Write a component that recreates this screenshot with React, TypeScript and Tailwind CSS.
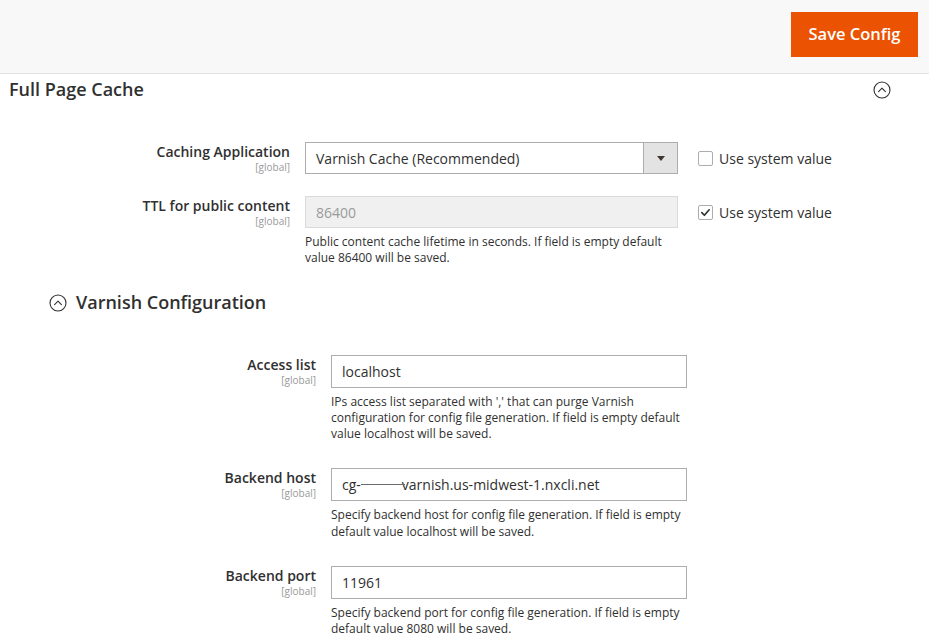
import React from "react";

const font = { fontFamily: '"Open Sans", "Liberation Sans", sans-serif' };

function CircleUp({ className = "" }: { className?: string }) {
    return (
        <svg viewBox="0 0 18 18" className={className} fill="none" stroke="#303030" strokeWidth="1.1">
            <circle cx="9" cy="9" r="8" />
            <path d="M5.6 10.6 L9 7.2 L12.4 10.6" strokeLinecap="round" strokeLinejoin="round" />
        </svg>
    );
}

function Checkbox({ checked }: { checked?: boolean }) {
    return (
        <span className="w-[15px] h-[15px] border border-[#adadad] bg-white rounded-[2px] flex items-center justify-center shrink-0">
            {checked && (
                <svg viewBox="0 0 12 12" className="w-[11px] h-[11px]" fill="none" stroke="#303030" strokeWidth="1.8">
                    <path d="M2 6.2 L4.8 9 L10 3" strokeLinecap="round" strokeLinejoin="round" />
                </svg>
            )}
        </span>
    );
}

function Label({ text, width }: { text: string; width: string }) {
    return (
        <div className={`${width} shrink-0 text-right pt-[1px] pr-[15px]`}>
            <div className="text-[14px] leading-[18px] font-semibold text-[#303030]">{text}</div>
            <div className="text-[10px] leading-[12px] text-[#999999]">[global]</div>
        </div>
    );
}

function Note({ children }: { children: React.ReactNode }) {
    return <p className="mt-[6px] text-[12px] leading-[16.25px] text-[#303030]">{children}</p>;
}

export default function App() {
    return (
        <div className="min-h-screen bg-white" style={font}>
            {/* top action bar */}
            <div className="h-[74px] bg-[#f8f8f8] border-b border-[#e3e3e3] flex items-start justify-end pr-[11px] pt-[12px]">
                <button className="h-[45px] w-[127px] bg-[#eb5202] text-white text-[16.5px] font-semibold">
                    Save Config
                </button>
            </div>

            {/* section header */}
            <div className="flex items-center justify-between pl-[9px] pr-[38px] h-[31px]">
                <h2 className="text-[18px] font-semibold text-[#303030]">Full Page Cache</h2>
                <CircleUp className="w-[18px] h-[18px]" />
            </div>

            <div className="pt-[37px]">
                {/* Caching Application */}
                <div className="flex">
                    <Label text="Caching Application" width="w-[305px]" />
                    <div className="w-[373px] h-[32px] border border-[#adadad] flex items-stretch">
                        <div className="flex-1 flex items-center pl-[10px] text-[14px] text-[#303030]">
                            Varnish Cache (Recommended)
                        </div>
                        <div className="w-[34px] bg-[#e3e3e3] border-l border-[#adadad] flex items-center justify-center">
                            <span className="w-0 h-0 border-l-[4px] border-r-[4px] border-t-[5px] border-l-transparent border-r-transparent border-t-[#41362f]" />
                        </div>
                    </div>
                    <label className="ml-[20px] flex items-center gap-[6px] h-[32px] text-[14px] text-[#303030]">
                        <Checkbox />
                        Use system value
                    </label>
                </div>

                {/* TTL */}
                <div className="flex mt-[22px]">
                    <Label text="TTL for public content" width="w-[305px]" />
                    <div className="w-[373px]">
                        <div className="h-[32px] border border-[#dadada] bg-[#f0f0f0] flex items-center pl-[10px] text-[14px] text-[#9a9a9a]">
                            86400
                        </div>
                        <Note>
                            Public content cache lifetime in seconds. If field is empty default value 86400 will be
                            saved.
                        </Note>
                    </div>
                    <label className="ml-[20px] flex items-center gap-[6px] h-[32px] text-[14px] text-[#303030]">
                        <Checkbox checked />
                        Use system value
                    </label>
                </div>
            </div>

            {/* Varnish Configuration */}
            <div className="flex items-center gap-[9px] pl-[49px] mt-[25px] h-[22px]">
                <CircleUp className="w-[18px] h-[18px]" />
                <h3 className="text-[18px] font-semibold text-[#303030]">Varnish Configuration</h3>
            </div>

            <div className="pt-[41px] flex flex-col gap-[26px]">
                <div className="flex">
                    <Label text="Access list" width="w-[331px]" />
                    <div className="w-[356px]">
                        <div className="h-[33px] border border-[#adadad] flex items-center pl-[10px] text-[14px] text-[#303030]">
                            localhost
                        </div>
                        <Note>
                            IPs access list separated with ',' that can purge Varnish configuration for config file
                            generation. If field is empty default value localhost will be saved.
                        </Note>
                    </div>
                </div>

                <div className="flex">
                    <Label text="Backend host" width="w-[331px]" />
                    <div className="w-[356px]">
                        <div className="h-[33px] border border-[#adadad] flex items-center pl-[10px] text-[14px] text-[#303030]">
                            cg-
                            <span className="inline-block w-[44px] h-px bg-[#6b6b6b] -mr-[3px] relative z-10" />
                            varnish.us-midwest-1.nxcli.net
                        </div>
                        <Note>
                            Specify backend host for config file generation. If field is empty default value localhost
                            will be saved.
                        </Note>
                    </div>
                </div>

                <div className="flex">
                    <Label text="Backend port" width="w-[331px]" />
                    <div className="w-[356px]">
                        <div className="h-[33px] border border-[#adadad] flex items-center pl-[10px] text-[14px] text-[#303030]">
                            11961
                        </div>
                        <Note>
                            Specify backend port for config file generation. If field is empty default value 8080 will be
                            saved.
                        </Note>
                    </div>
                </div>
            </div>
        </div>
    );
}
